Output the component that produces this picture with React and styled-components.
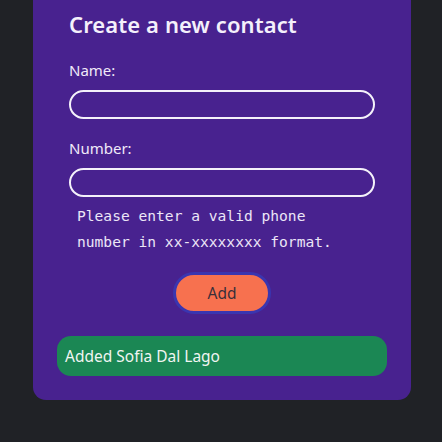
import React from "react";
import styled, { createGlobalStyle } from "styled-components";

const Global = createGlobalStyle`
  html, body { margin: 0; padding: 0; background: #202226; }
  body { font-family: "Noto Sans", "Open Sans", sans-serif; }
`;

const Page = styled.div`
  width: 442px;
  height: 442px;
  background: #202226;
  display: flex;
  justify-content: center;
  align-items: flex-start;
`;

const Card = styled.div`
  width: 378px;
  box-sizing: border-box;
  margin-left: 2px;
  background: #48228f;
  border-radius: 0 0 13px 13px;
  padding: 9px 36px 24px;
  display: flex;
  flex-direction: column;
`;

const Title = styled.h2`
  margin: 0;
  font-size: 22px;
  line-height: 30px;
  font-weight: 600;
  letter-spacing: 0.1px;
  color: #f4f0fb;
`;

const Form = styled.form`
  display: flex;
  flex-direction: column;
`;

const Label = styled.label`
  display: block;
  margin-top: ${(p) => p.$top}px;
  font-size: 15px;
  line-height: 20px;
  font-weight: 400;
  color: #f0eaf9;
`;

const Input = styled.input`
  display: block;
  box-sizing: border-box;
  width: 306px;
  height: 29px;
  margin-top: 10px;
  border: 2px solid #f4f1fa;
  border-radius: 15px;
  background: transparent;
  outline: none;
  padding: 0 12px;
  color: #fff;
  font-size: 15px;
`;

const Hint = styled.p`
  margin: 6px 0 0;
  padding-left: 8px;
  font-family: "DejaVu Sans Mono", "Liberation Mono", monospace;
  font-size: 14.6px;
  line-height: 26px;
  color: #ece6f7;
`;

const Button = styled.button`
  align-self: center;
  margin-top: 17px;
  box-sizing: border-box;
  width: 98px;
  height: 42px;
  border: 3px solid #3a35b0;
  border-radius: 21px;
  background: #f7714f;
  color: #3a2f3a;
  font-family: "Noto Sans", sans-serif;
  font-size: 15.5px;
  cursor: pointer;
`;

const Notice = styled.div`
  margin: 22px -12px 0;
  height: 40px;
  box-sizing: border-box;
  padding: 0 8px;
  display: flex;
  align-items: center;
  background: #1b8754;
  border-radius: 14px;
  color: #f1f5f2;
  font-size: 15.5px;
`;

export default function App() {
  return (
    <>
      <Global />
      <Page>
        <Card>
          <Title>Create a new contact</Title>
          <Form onSubmit={(e) => e.preventDefault()}>
            <Label $top={21} htmlFor="name">Name:</Label>
            <Input id="name" type="text" />
            <Label $top={19} htmlFor="number">Number:</Label>
            <Input id="number" type="tel" />
            <Hint>
              Please enter a valid phone
              <br />
              number in xx-xxxxxxxx format.
            </Hint>
            <Button type="submit">Add</Button>
          </Form>
          <Notice>Added Sofia Dal Lago</Notice>
        </Card>
      </Page>
    </>
  );
}
